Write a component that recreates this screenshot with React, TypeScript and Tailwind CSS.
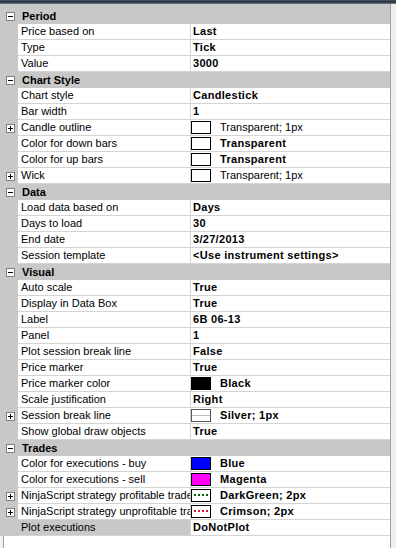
import React from 'react';

type Swatch = 'empty' | 'black' | 'blue' | 'magenta' | 'silver' | 'green' | 'crimson';

type Row = {
  label: string;
  value: string;
  plain?: boolean;
  expand?: boolean;
  swatch?: Swatch;
  selected?: boolean;
};

type Section = { title: string; rows: Row[] };

const sections: Section[] = [
  {
    title: 'Period',
    rows: [
      { label: 'Price based on', value: 'Last' },
      { label: 'Type', value: 'Tick' },
      { label: 'Value', value: '3000' },
    ],
  },
  {
    title: 'Chart Style',
    rows: [
      { label: 'Chart style', value: 'Candlestick' },
      { label: 'Bar width', value: '1' },
      { label: 'Candle outline', value: 'Transparent; 1px', plain: true, expand: true, swatch: 'empty' },
      { label: 'Color for down bars', value: 'Transparent', swatch: 'empty' },
      { label: 'Color for up bars', value: 'Transparent', swatch: 'empty' },
      { label: 'Wick', value: 'Transparent; 1px', plain: true, expand: true, swatch: 'empty' },
    ],
  },
  {
    title: 'Data',
    rows: [
      { label: 'Load data based on', value: 'Days' },
      { label: 'Days to load', value: '30' },
      { label: 'End date', value: '3/27/2013' },
      { label: 'Session template', value: '<Use instrument settings>' },
    ],
  },
  {
    title: 'Visual',
    rows: [
      { label: 'Auto scale', value: 'True' },
      { label: 'Display in Data Box', value: 'True' },
      { label: 'Label', value: '6B 06-13' },
      { label: 'Panel', value: '1' },
      { label: 'Plot session break line', value: 'False' },
      { label: 'Price marker', value: 'True' },
      { label: 'Price marker color', value: 'Black', swatch: 'black' },
      { label: 'Scale justification', value: 'Right' },
      { label: 'Session break line', value: 'Silver; 1px', expand: true, swatch: 'silver' },
      { label: 'Show global draw objects', value: 'True' },
    ],
  },
  {
    title: 'Trades',
    rows: [
      { label: 'Color for executions - buy', value: 'Blue', swatch: 'blue' },
      { label: 'Color for executions - sell', value: 'Magenta', swatch: 'magenta' },
      { label: 'NinjaScript strategy profitable trades', value: 'DarkGreen; 2px', expand: true, swatch: 'green' },
      { label: 'NinjaScript strategy unprofitable trades', value: 'Crimson; 2px', expand: true, swatch: 'crimson' },
      { label: 'Plot executions', value: 'DoNotPlot', selected: true },
    ],
  },
];

function ToggleBox({ open }: { open: boolean }) {
  return (
    <div className="relative w-[9px] h-[9px] border border-[#808080] bg-white">
      <div className="absolute left-[1px] top-[3px] w-[5px] h-px bg-black" />
      {!open && <div className="absolute left-[3px] top-[1px] w-px h-[5px] bg-black" />}
    </div>
  );
}

function SwatchBox({ kind }: { kind: Swatch }) {
  if (kind === 'black') return <div className="w-5 h-[13px] border border-black bg-black" />;
  if (kind === 'blue') return <div className="w-5 h-[13px] border border-black bg-[#0000ff]" />;
  if (kind === 'magenta') return <div className="w-5 h-[13px] border border-black bg-[#ff00ff]" />;
  if (kind === 'silver')
    return (
      <div className="w-5 h-[13px] border border-[#555] bg-white flex items-center">
        <div className="w-full h-px bg-[#c0c0c0]" />
      </div>
    );
  if (kind === 'green')
    return (
      <div className="w-5 h-[13px] border border-black bg-white flex items-center px-[2px]">
        <div className="w-full border-t-2 border-dotted border-[#006400]" />
      </div>
    );
  if (kind === 'crimson')
    return (
      <div className="w-5 h-[13px] border border-black bg-white flex items-center px-[2px]">
        <div className="w-full border-t-2 border-dotted border-[#dc143c]" />
      </div>
    );
  return <div className="w-5 h-[13px] border border-black bg-white" />;
}

function PropRow({ row }: { row: Row }) {
  return (
    <div className="flex h-4">
      <div className="w-[18px] shrink-0 bg-[#c8c8c8] flex items-center justify-end pr-[3px]">
        {row.expand && <ToggleBox open={false} />}
      </div>
      <div
        className={`w-[172px] shrink-0 border-b border-[#d4d4d4] overflow-hidden whitespace-nowrap pl-[3px] leading-[15px] ${
          row.selected ? 'bg-[#c8c8c8]' : 'bg-white'
        }`}
      >
        {row.label}
      </div>
      <div className="w-px shrink-0 bg-[#d4d4d4]" />
      <div className="w-[199px] shrink-0 border-b border-[#d4d4d4] bg-white flex items-center h-4 overflow-hidden whitespace-nowrap">
        {row.swatch ? (
          <>
            <div className="pl-0 pb-px">
              <SwatchBox kind={row.swatch} />
            </div>
            <span className={`ml-[9px] leading-[15px] pb-px ${row.plain ? '' : 'font-bold tracking-[0.3px]'}`}>
              {row.value}
            </span>
          </>
        ) : (
          <span className="pl-[2px] leading-[15px] pb-px font-bold tracking-[0.3px]">{row.value}</span>
        )}
      </div>
    </div>
  );
}

function HeaderRow({ title, first }: { title: string; first?: boolean }) {
  return (
    <div className={`flex bg-[#c8c8c8] ${first ? 'h-5 pt-1' : 'h-4'}`}>
      <div className="w-[18px] shrink-0 flex items-center justify-end pr-[3px]">
        <ToggleBox open />
      </div>
      <div className="pl-1 font-bold leading-4">{title}</div>
    </div>
  );
}

export default function App() {
  return (
    <div className="w-[396px] h-[548px] overflow-hidden bg-[#f0f0f0] text-[11px] text-black font-['Tahoma','Liberation_Sans',Arial,sans-serif]">
      <div className="h-[4px] bg-gradient-to-b from-[#4a5866] via-[#1f2c3a] to-[#7d8792]" />
      <div className="flex">
        <div className="w-[390px] shrink-0 flex flex-col">
          {sections.map((s, i) => (
            <React.Fragment key={s.title}>
              <HeaderRow title={s.title} first={i === 0} />
              {s.rows.map((r) => (
                <PropRow key={r.label} row={r} />
              ))}
            </React.Fragment>
          ))}
          <div className="flex h-[12px]">
            <div className="w-[3px] bg-[#f0f0f0]" />
            <div className="w-px bg-[#a0a0a0]" />
            <div className="flex-1 bg-white" />
          </div>
        </div>
        <div className="w-px shrink-0 bg-[#a0a0a0] h-[544px]" />
        <div className="flex-1 bg-[#f0f0f0]" />
      </div>
    </div>
  );
}
